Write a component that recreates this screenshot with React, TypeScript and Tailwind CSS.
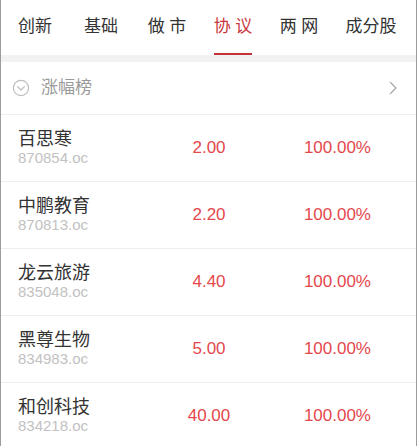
import React from "react";

const tabs = ["创新", "基础", "做 市", "协 议", "两 网", "成分股"];

const stocks = [
  { name: "百思寒", code: "870854.oc", price: "2.00", pct: "100.00%" },
  { name: "中鹏教育", code: "870813.oc", price: "2.20", pct: "100.00%" },
  { name: "龙云旅游", code: "835048.oc", price: "4.40", pct: "100.00%" },
  { name: "黑尊生物", code: "834983.oc", price: "5.00", pct: "100.00%" },
  { name: "和创科技", code: "834218.oc", price: "40.00", pct: "100.00%" },
];

const App: React.FC = () => {
  return (
    <div
      className="w-[417px] h-[446px] overflow-hidden bg-white border-x border-[#9c9c9c]"
      style={{ fontFamily: '"Liberation Sans", "Noto Sans CJK SC", sans-serif' }}
    >
      {/* tab bar */}
      <div className="flex h-[55px] pl-[1px]">
        {tabs.map((t, i) => {
          const active = i === 3;
          return (
            <div
              key={t}
              className={`${i === 5 ? "w-[78px]" : "w-[66px]"} flex flex-col items-center`}
            >
              <div
                className={`flex-1 flex items-center text-[17px] leading-none ${
                  active ? "text-[#c9363b]" : "text-[#333333]"
                }`}
              >
                {t}
              </div>
              <div className={`h-[2px] w-[38px] ${active ? "bg-[#c33237]" : ""}`} />
            </div>
          );
        })}
      </div>
      <div className="h-[7px] bg-[#f2f2f2]" />

      {/* section header */}
      <div className="flex items-center h-[53px] pl-[11px] pr-[18px] border-b border-[#eeeeee]">
        <svg width="18" height="18" viewBox="0 0 18 18" fill="none" stroke="#bdbdbd" strokeWidth="1.2">
          <circle cx="9" cy="9" r="7.6" />
          <path d="M5.6 7.6 L9 11 L12.4 7.6" strokeLinecap="round" strokeLinejoin="round" />
        </svg>
        <span className="ml-[11px] text-[17px] text-[#9a9a9a]">涨幅榜</span>
        <svg className="ml-auto" width="9" height="14" viewBox="0 0 9 14" fill="none" stroke="#a8a8a8" strokeWidth="1.3">
          <path d="M1.5 1.5 L7 7 L1.5 12.5" strokeLinecap="round" strokeLinejoin="round" />
        </svg>
      </div>

      {/* rows */}
      {stocks.map((s) => (
        <div key={s.code} className="flex items-center h-[67px] border-b border-[#eeeeee] pl-[17px]">
          <div className="w-[141px] flex flex-col">
            <span className="text-[18px] leading-[20px] text-[#333333]">{s.name}</span>
            <span className="text-[15px] leading-[18px] text-[#c2c2c2]">{s.code}</span>
          </div>
          <div className="w-[100px] text-center text-[17px] text-[#e4484c]">{s.price}</div>
          <div className="w-[112px] text-right text-[17px] text-[#e4484c]">{s.pct}</div>
        </div>
      ))}
    </div>
  );
};

export default App;
